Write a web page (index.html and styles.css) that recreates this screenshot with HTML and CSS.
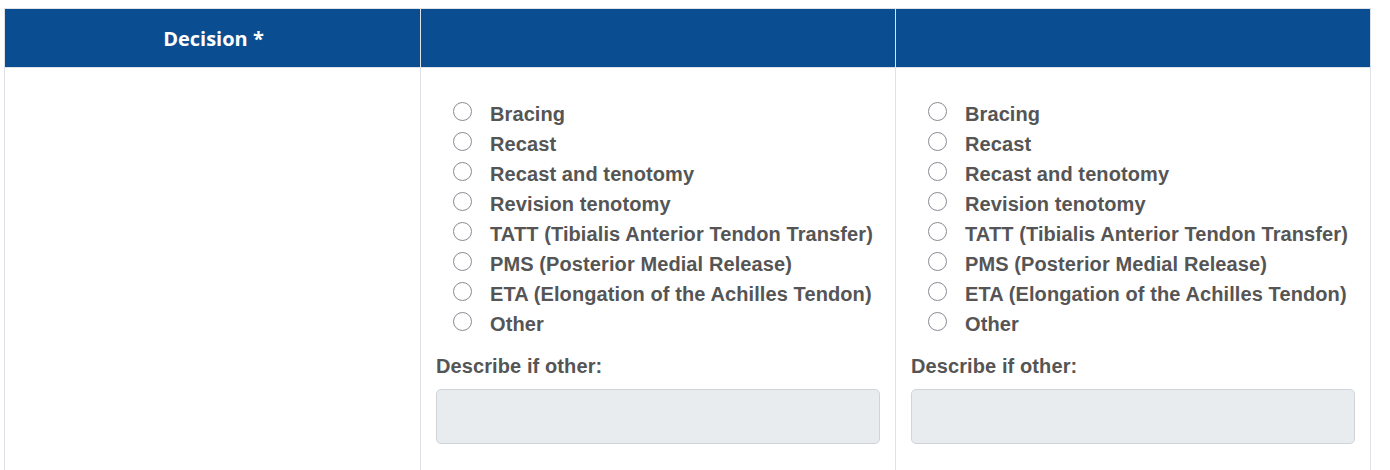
FILE: index.html
```html
<!DOCTYPE html>
<html lang="en">
<head>
<meta charset="utf-8">
<title>Decision</title>
<link rel="stylesheet" href="styles.css">
</head>
<body>
<div class="page">
  <table class="grid">
    <colgroup>
      <col class="c1"><col class="c2"><col class="c3">
    </colgroup>
    <thead>
      <tr>
        <th>Decision *</th>
        <th></th>
        <th></th>
      </tr>
    </thead>
    <tbody>
      <tr>
        <td></td>
        <td>
          <ul class="radios">
            <li><label><input type="radio" name="d1"><span>Bracing</span></label></li>
            <li><label><input type="radio" name="d1"><span>Recast</span></label></li>
            <li><label><input type="radio" name="d1"><span>Recast and tenotomy</span></label></li>
            <li><label><input type="radio" name="d1"><span>Revision tenotomy</span></label></li>
            <li><label><input type="radio" name="d1"><span>TATT (Tibialis Anterior Tendon Transfer)</span></label></li>
            <li><label><input type="radio" name="d1"><span>PMS (Posterior Medial Release)</span></label></li>
            <li><label><input type="radio" name="d1"><span>ETA (Elongation of the Achilles Tendon)</span></label></li>
            <li><label><input type="radio" name="d1"><span>Other</span></label></li>
          </ul>
          <div class="other-label">Describe if other:</div>
          <input class="other-input" type="text" disabled>
        </td>
        <td>
          <ul class="radios">
            <li><label><input type="radio" name="d2"><span>Bracing</span></label></li>
            <li><label><input type="radio" name="d2"><span>Recast</span></label></li>
            <li><label><input type="radio" name="d2"><span>Recast and tenotomy</span></label></li>
            <li><label><input type="radio" name="d2"><span>Revision tenotomy</span></label></li>
            <li><label><input type="radio" name="d2"><span>TATT (Tibialis Anterior Tendon Transfer)</span></label></li>
            <li><label><input type="radio" name="d2"><span>PMS (Posterior Medial Release)</span></label></li>
            <li><label><input type="radio" name="d2"><span>ETA (Elongation of the Achilles Tendon)</span></label></li>
            <li><label><input type="radio" name="d2"><span>Other</span></label></li>
          </ul>
          <div class="other-label">Describe if other:</div>
          <input class="other-input" type="text" disabled>
        </td>
      </tr>
    </tbody>
  </table>
</div>
</body>
</html>
```

FILE: styles.css
```css
html, body {
  margin: 0;
  padding: 0;
  background: #ffffff;
}

.page {
  padding: 8px 0 0 4px;
  font-family: "Liberation Sans", Arial, sans-serif;
}

.grid {
  border-collapse: collapse;
  width: 1367px;
  table-layout: fixed;
}

.c1 { width: 416px; }
.c2 { width: 475px; }
.c3 { width: 475px; }

.grid th,
.grid td {
  border: 1px solid #dee2e6;
}

.grid th {
  background: #0b4d91;
  color: #ffffff;
  height: 58px;
  padding: 0 0 0 2px;
  font-family: "Open Sans", sans-serif;
  font-size: 20px;
  font-weight: 700;
  text-align: center;
  vertical-align: middle;
}

.grid td {
  vertical-align: top;
  padding: 15px 15px 25px 15px;
  height: 420px;
}

.radios {
  list-style: none;
  margin: 16px 0 12px 0;
  padding: 0 0 0 17px;
}

.radios li {
  height: 30px;
  line-height: 30px;
}

.radios label {
  display: flex;
  align-items: center;
  height: 30px;
  gap: 18px;
  color: #555555;
  font-size: 20px;
  font-weight: 700;
  letter-spacing: 0.1px;
}

.radios input {
  appearance: none;
  -webkit-appearance: none;
  margin: 0;
  width: 19px;
  height: 19px;
  border: 1.5px solid #8a8a94;
  border-radius: 50%;
  background: #ffffff;
  flex: none;
  position: relative;
  top: -3px;
}

.other-label {
  color: #555555;
  font-size: 20px;
  font-weight: 700;
  line-height: 30px;
  letter-spacing: 0.1px;
  margin-bottom: 8px;
}

.other-input {
  display: block;
  box-sizing: border-box;
  width: 100%;
  height: 55px;
  margin: 0;
  background: #e9ecef;
  border: 1px solid #ced4da;
  border-radius: 5px;
}
```
